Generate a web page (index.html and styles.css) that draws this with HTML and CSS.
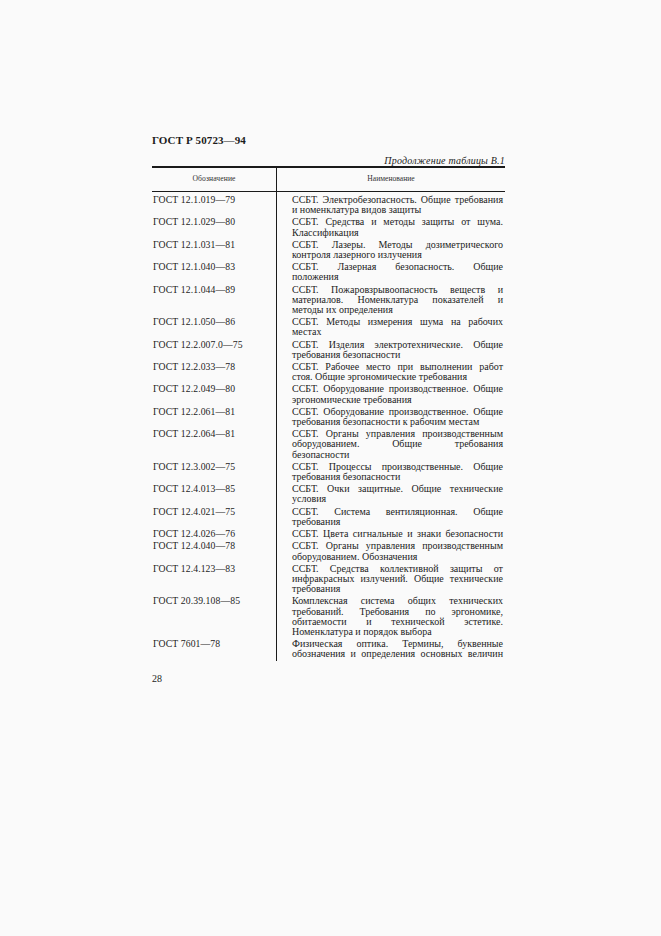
FILE: index.html
```html
<!DOCTYPE html>
<html lang="ru">
<head>
<meta charset="utf-8">
<title>ГОСТ Р 50723—94</title>
<link rel="stylesheet" href="styles.css">
</head>
<body>
<div class="page">
  <div class="doc-id">ГОСТ Р 50723—94</div>
  <div class="caption">Продолжение таблицы В.1</div>
  <div class="table">
    <div class="row head">
      <div class="c1">Обозначение</div>
      <div class="c2">Наименование</div>
    </div>
    <div class="row">
      <div class="c1">ГОСТ 12.1.019—79</div>
      <div class="c2"><div class="j">ССБТ. Электробезопасность. Общие требования</div><div>и номенклатура видов защиты</div></div>
    </div>
    <div class="row">
      <div class="c1">ГОСТ 12.1.029—80</div>
      <div class="c2"><div class="j">ССБТ. Средства и методы защиты от шума.</div><div>Классификация</div></div>
    </div>
    <div class="row">
      <div class="c1">ГОСТ 12.1.031—81</div>
      <div class="c2"><div class="j">ССБТ. Лазеры. Методы дозиметрического</div><div>контроля лазерного излучения</div></div>
    </div>
    <div class="row">
      <div class="c1">ГОСТ 12.1.040—83</div>
      <div class="c2"><div class="j">ССБТ. Лазерная безопасность. Общие</div><div>положения</div></div>
    </div>
    <div class="row">
      <div class="c1">ГОСТ 12.1.044—89</div>
      <div class="c2"><div class="j">ССБТ. Пожаровзрывоопасность веществ и</div><div class="j">материалов. Номенклатура показателей и</div><div>методы их определения</div></div>
    </div>
    <div class="row">
      <div class="c1">ГОСТ 12.1.050—86</div>
      <div class="c2"><div class="j">ССБТ. Методы измерения шума на рабочих</div><div>местах</div></div>
    </div>
    <div class="row">
      <div class="c1">ГОСТ 12.2.007.0—75</div>
      <div class="c2"><div class="j">ССБТ. Изделия электротехнические. Общие</div><div>требования безопасности</div></div>
    </div>
    <div class="row">
      <div class="c1">ГОСТ 12.2.033—78</div>
      <div class="c2"><div class="j">ССБТ. Рабочее место при выполнении работ</div><div>стоя. Общие эргономические требования</div></div>
    </div>
    <div class="row">
      <div class="c1">ГОСТ 12.2.049—80</div>
      <div class="c2"><div class="j">ССБТ. Оборудование производственное. Общие</div><div>эргономические требования</div></div>
    </div>
    <div class="row">
      <div class="c1">ГОСТ 12.2.061—81</div>
      <div class="c2"><div class="j">ССБТ. Оборудование производственное. Общие</div><div>требования безопасности к рабочим местам</div></div>
    </div>
    <div class="row">
      <div class="c1">ГОСТ 12.2.064—81</div>
      <div class="c2"><div class="j">ССБТ. Органы управления производственным</div><div class="j">оборудованием. Общие требования</div><div>безопасности</div></div>
    </div>
    <div class="row">
      <div class="c1">ГОСТ 12.3.002—75</div>
      <div class="c2"><div class="j">ССБТ. Процессы производственные. Общие</div><div>требования безопасности</div></div>
    </div>
    <div class="row">
      <div class="c1">ГОСТ 12.4.013—85</div>
      <div class="c2"><div class="j">ССБТ. Очки защитные. Общие технические</div><div>условия</div></div>
    </div>
    <div class="row">
      <div class="c1">ГОСТ 12.4.021—75</div>
      <div class="c2"><div class="j">ССБТ. Система вентиляционная. Общие</div><div>требования</div></div>
    </div>
    <div class="row">
      <div class="c1">ГОСТ 12.4.026—76</div>
      <div class="c2"><div class="j">ССБТ. Цвета сигнальные и знаки безопасности</div></div>
    </div>
    <div class="row">
      <div class="c1">ГОСТ 12.4.040—78</div>
      <div class="c2"><div class="j">ССБТ. Органы управления производственным</div><div>оборудованием. Обозначения</div></div>
    </div>
    <div class="row">
      <div class="c1">ГОСТ 12.4.123—83</div>
      <div class="c2"><div class="j">ССБТ. Средства коллективной защиты от</div><div class="j">инфракрасных излучений. Общие технические</div><div>требования</div></div>
    </div>
    <div class="row">
      <div class="c1">ГОСТ 20.39.108—85</div>
      <div class="c2"><div class="j">Комплексная система общих технических</div><div class="j">требований. Требования по эргономике,</div><div class="j">обитаемости и технической эстетике.</div><div>Номенклатура и порядок выбора</div></div>
    </div>
    <div class="row last">
      <div class="c1">ГОСТ 7601—78</div>
      <div class="c2"><div class="j">Физическая оптика. Термины, буквенные</div><div class="j">обозначения и определения основных величин</div></div>
    </div>
  </div>
  <div class="page-num">28</div>
</div>
</body>
</html>
```

FILE: styles.css
```css
html, body {
  margin: 0;
  padding: 0;
  background: #fafafa;
}

body {
  font-family: "Liberation Serif", "Times New Roman", serif;
  color: #1c1c1c;
}

.page {
  width: 353px;
  margin-left: 152px;
  padding-top: 134px;
}

.doc-id {
  font-weight: bold;
  font-size: 11px;
  line-height: 12px;
  letter-spacing: 0.1px;
}

.caption {
  margin-top: 9px;
  font-style: italic;
  font-size: 10px;
  line-height: 11px;
  text-align: right;
  letter-spacing: 0.2px;
}

.table {
  border-top: 2px solid #1a1a1a;
  font-size: 10px;
  line-height: 10.2px;
}

.row {
  display: flex;
}

.c1 {
  width: 125px;
  flex: none;
  padding-left: 1px;
  box-sizing: border-box;
  border-right: 1px solid #1a1a1a;
  padding-bottom: 2px;
  font-size: 9.7px;
  letter-spacing: 0.1px;
}

.c2 {
  flex: 1;
  padding-left: 15px;
  padding-right: 2px;
  padding-bottom: 2px;
}

.j {
  text-align: justify;
  text-align-last: justify;
}

.row.head {
  height: 23px;
  border-bottom: 1px solid #1a1a1a;
  font-size: 7.6px;
  line-height: 8px;
  color: #333;
  margin-bottom: 3px;
}

.row.head .c1,
.row.head .c2 {
  display: flex;
  align-items: center;
  justify-content: center;
  padding: 0 0 2px 0;
  font-size: 7.6px;
}

.row.head .c2 {
  padding-left: 0;
  padding-right: 0;
}

.row.head + .row .c1 {
  margin-top: -3px;
  padding-top: 3px;
}

.row.last .c1,
.row.last .c2 {
  padding-bottom: 1px;
}

.page-num {
  margin-top: 12px;
  font-size: 10px;
  line-height: 11px;
}
```
